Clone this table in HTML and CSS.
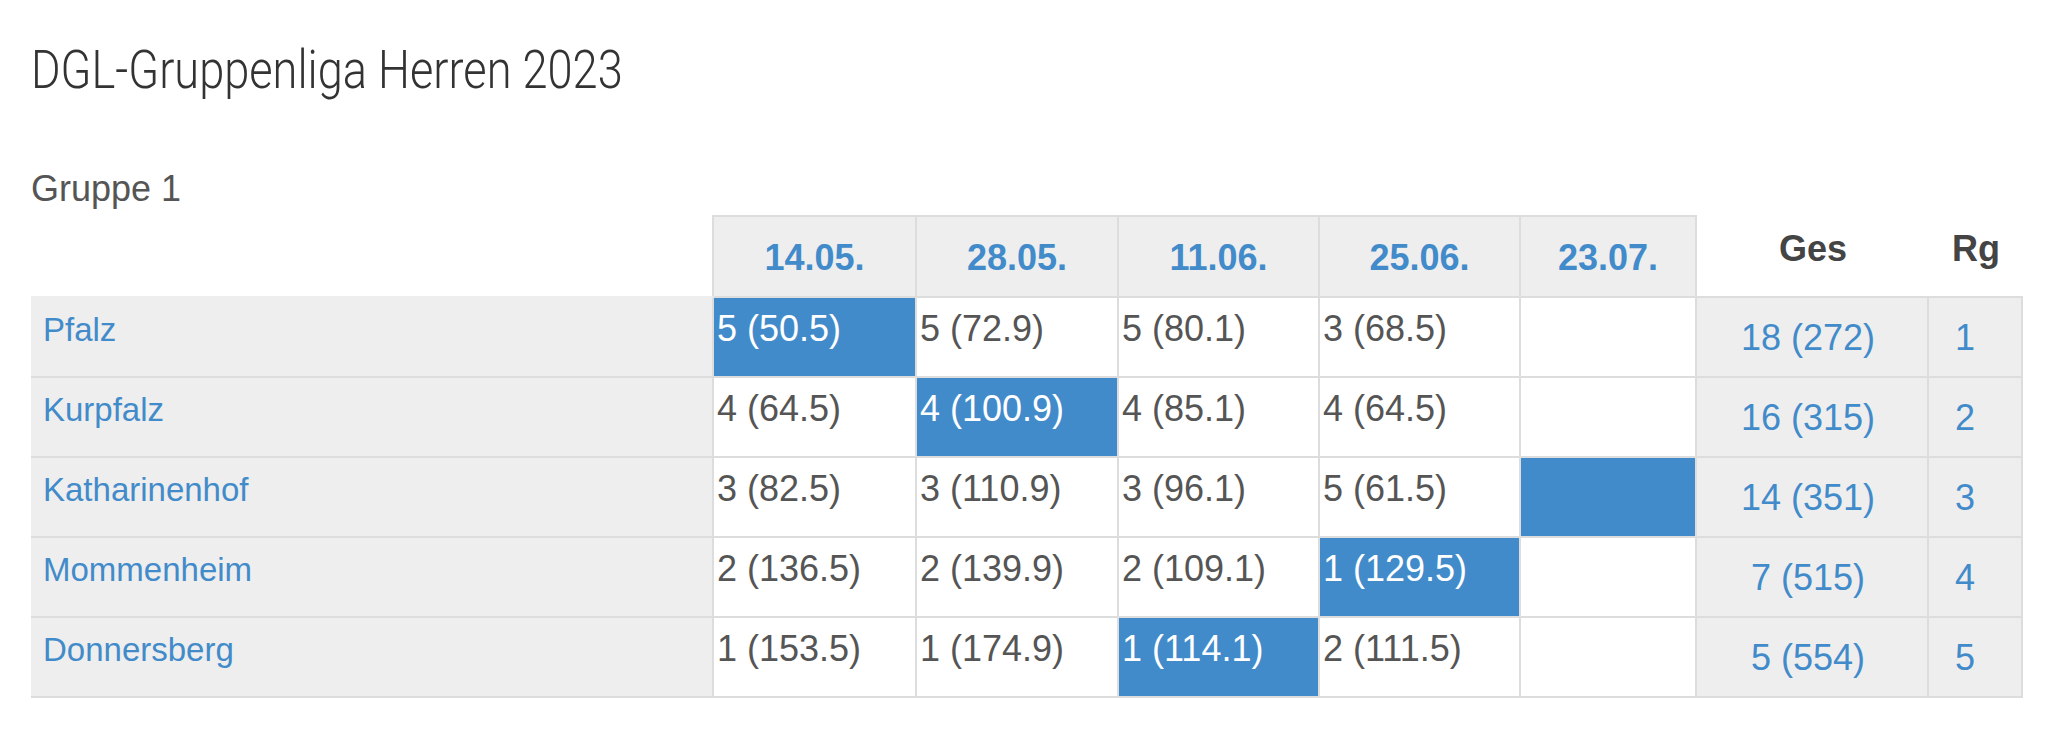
FILE: index.html
```html
<!DOCTYPE html>
<html lang="de">
<head>
<meta charset="utf-8">
<title>DGL-Gruppenliga Herren 2023</title>
<link rel="stylesheet" href="styles.css">
</head>
<body>
<main class="page">
  <h1 class="title"><span class="title-text">DGL-Gruppenliga Herren 2023</span></h1>
  <h2 class="group">Gruppe 1</h2>
  <table class="standings">
    <colgroup>
      <col class="c-name"><col class="c-d1"><col class="c-d2"><col class="c-d3"><col class="c-d4"><col class="c-d5"><col class="c-ges"><col class="c-rg">
    </colgroup>
    <thead>
      <tr>
        <th class="h-name"></th>
        <th class="h-date"><a href="#">14.05.</a></th>
        <th class="h-date"><a href="#">28.05.</a></th>
        <th class="h-date"><a href="#">11.06.</a></th>
        <th class="h-date"><a href="#">25.06.</a></th>
        <th class="h-date"><a href="#">23.07.</a></th>
        <th class="h-sum">Ges</th>
        <th class="h-sum">Rg</th>
      </tr>
    </thead>
    <tbody>
      <tr>
        <td class="team"><a href="#">Pfalz</a></td>
        <td class="res hl">5 (50.5)</td>
        <td class="res">5 (72.9)</td>
        <td class="res">5 (80.1)</td>
        <td class="res">3 (68.5)</td>
        <td class="res"></td>
        <td class="sum ges"><a href="#">18 (272)</a></td>
        <td class="sum rank"><a href="#">1</a></td>
      </tr>
      <tr>
        <td class="team"><a href="#">Kurpfalz</a></td>
        <td class="res">4 (64.5)</td>
        <td class="res hl">4 (100.9)</td>
        <td class="res">4 (85.1)</td>
        <td class="res">4 (64.5)</td>
        <td class="res"></td>
        <td class="sum ges"><a href="#">16 (315)</a></td>
        <td class="sum rank"><a href="#">2</a></td>
      </tr>
      <tr>
        <td class="team"><a href="#">Katharinenhof</a></td>
        <td class="res">3 (82.5)</td>
        <td class="res">3 (110.9)</td>
        <td class="res">3 (96.1)</td>
        <td class="res">5 (61.5)</td>
        <td class="res hl"></td>
        <td class="sum ges"><a href="#">14 (351)</a></td>
        <td class="sum rank"><a href="#">3</a></td>
      </tr>
      <tr>
        <td class="team"><a href="#">Mommenheim</a></td>
        <td class="res">2 (136.5)</td>
        <td class="res">2 (139.9)</td>
        <td class="res">2 (109.1)</td>
        <td class="res hl">1 (129.5)</td>
        <td class="res"></td>
        <td class="sum ges"><a href="#">7 (515)</a></td>
        <td class="sum rank"><a href="#">4</a></td>
      </tr>
      <tr>
        <td class="team"><a href="#">Donnersberg</a></td>
        <td class="res">1 (153.5)</td>
        <td class="res">1 (174.9)</td>
        <td class="res hl">1 (114.1)</td>
        <td class="res">2 (111.5)</td>
        <td class="res"></td>
        <td class="sum ges"><a href="#">5 (554)</a></td>
        <td class="sum rank"><a href="#">5</a></td>
      </tr>
    </tbody>
  </table>
</main>
</body>
</html>
```
FILE: styles.css
```css
* { box-sizing: border-box; }

body {
  margin: 0;
  background: #fff;
  font-family: "Liberation Sans", Arial, Helvetica, sans-serif;
  color: #555;
}

.page {
  padding: 38px 0 0 31px;
}

.title {
  margin: 0;
  font-family: Roboto, "Liberation Sans", sans-serif;
  font-weight: 300;
  font-size: 53px;
  line-height: 64px;
  color: #333;
}

.title-text {
  display: inline-block;
  transform: scaleX(0.852);
  transform-origin: 0 0;
  white-space: nowrap;
}

.group {
  margin: 66px 0 6px;
  font-size: 36px;
  line-height: 41px;
  font-weight: 400;
  color: #555;
}

.standings {
  border-collapse: separate;
  border-spacing: 0;
  table-layout: fixed;
  width: 1992px;
  font-size: 36px;
  line-height: 41px;
}

.c-name { width: 683px; }
.c-d1 { width: 203px; }
.c-d2 { width: 202px; }
.c-d3 { width: 201px; }
.c-d4 { width: 201px; }
.c-d5 { width: 176px; }
.c-ges { width: 232px; }
.c-rg { width: 94px; }

.standings th,
.standings td {
  padding: 0;
  vertical-align: top;
  white-space: nowrap;
}

.standings a {
  color: #428bca;
  text-decoration: none;
}

.standings thead tr { height: 81px; }

.h-name {
  border-right: 2px solid #ddd;
}

.h-date {
  background: #eee;
  border-top: 2px solid #ddd;
  border-right: 2px solid #ddd;
  padding-top: 20px !important;
  text-align: center;
  font-weight: 700;
}

.h-sum {
  padding-top: 13px !important;
  text-align: center;
  font-weight: 700;
  color: #444;
}

.standings tbody tr { height: 80px; }
.standings tbody tr:last-child { height: 82px; }

.standings tbody td {
  border-top: 2px solid #ddd;
  border-right: 2px solid #ddd;
}

.standings tbody tr:last-child td {
  border-bottom: 2px solid #ddd;
}

.team {
  background: #eee;
  font-size: 33px;
  padding: 11px 0 0 12px !important;
}

.standings tbody tr:first-child .team {
  border-top-color: #eee;
}

.res {
  padding: 10px 0 0 3px !important;
  color: #555;
}

.res.hl {
  background: #428bca;
  color: #fff;
}

.sum {
  background: #eee;
  text-align: center;
  vertical-align: middle !important;
}

.sum.ges { padding-right: 8px !important; }
.sum.rank { padding-right: 20px !important; }
```
